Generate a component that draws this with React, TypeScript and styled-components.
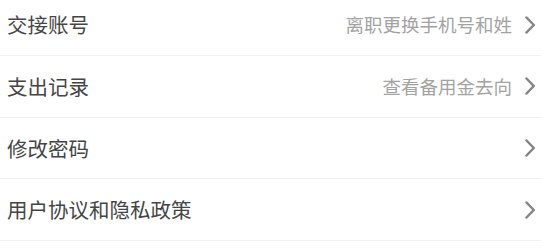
import styled, { createGlobalStyle } from "styled-components";

const GlobalStyle = createGlobalStyle`
  html, body {
    margin: 0;
    padding: 0;
    background: #ffffff;
    overflow: hidden;
  }
  body {
    font-family: "Noto Sans CJK SC", "Noto Sans", sans-serif;
  }
`;

const List = styled.div`
  margin-top: -5.67px;
  background: #ffffff;
`;

const Row = styled.div`
  box-sizing: border-box;
  height: 61.67px;
  display: flex;
  align-items: center;
  justify-content: space-between;
  padding: 0 5px 0 7px;
  border-bottom: 1px solid #f0f0f0;
`;

const Title = styled.span`
  font-size: 20.5px;
  font-weight: 400;
  color: #454545;
  line-height: 1;
`;

const Extra = styled.div`
  display: flex;
  align-items: center;
  gap: 12px;
`;

const Hint = styled.span`
  font-size: 18.5px;
  font-weight: 400;
  color: #a3a3a3;
  line-height: 1;
`;

const Chevron = () => (
  <svg width="12" height="18" viewBox="0 0 12 18" fill="none">
    <path
      d="M2.5 1.5 L9.8 9 L2.5 16.5"
      stroke="#858585"
      strokeWidth="2.5"
      strokeLinecap="round"
      strokeLinejoin="round"
    />
  </svg>
);

const items = [
  { title: "交接账号", hint: "离职更换手机号和姓" },
  { title: "支出记录", hint: "查看备用金去向" },
  { title: "修改密码", hint: "" },
  { title: "用户协议和隐私政策", hint: "" },
];

export default function App() {
  return (
    <>
      <GlobalStyle />
      <List>
        {items.map((item) => (
          <Row key={item.title}>
            <Title>{item.title}</Title>
            <Extra>
              {item.hint && <Hint>{item.hint}</Hint>}
              <Chevron />
            </Extra>
          </Row>
        ))}
      </List>
    </>
  );
}
